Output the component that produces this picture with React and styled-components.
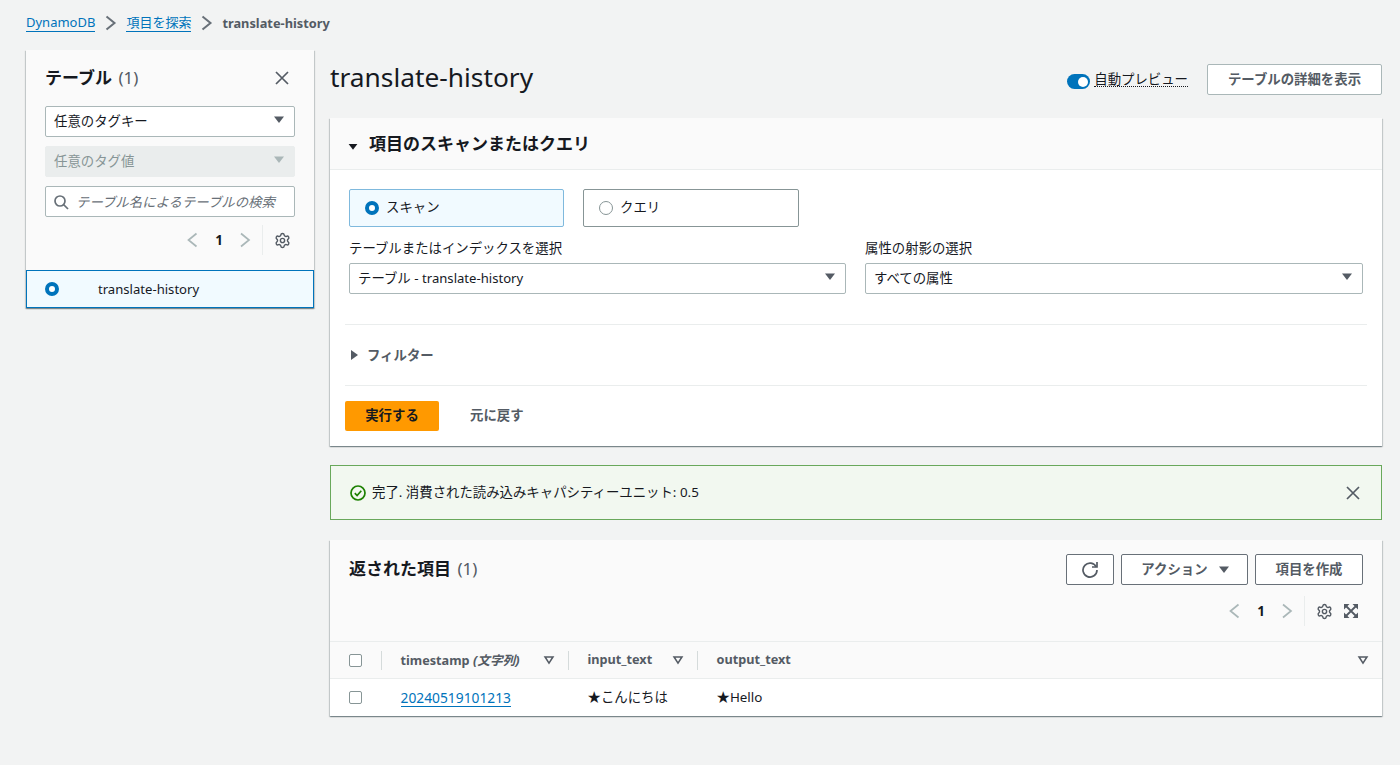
import React from 'react';
import styled, { createGlobalStyle } from 'styled-components';
import { Settings } from 'lucide-react';

const GlobalStyle = createGlobalStyle`
  html, body {
    margin: 0;
    padding: 0;
    background: #f2f3f3;
  }
  body {
    font-family: "Noto Sans", "Noto Sans CJK JP", sans-serif;
    font-size: 13.4px;
    color: #16191f;
  }
  * {
    box-sizing: border-box;
  }
`;

const Icon = ({ size = 16, color = '#545b64', width = 2, children }) => (
  <svg
    width={size}
    height={size}
    viewBox="0 0 16 16"
    fill="none"
    stroke={color}
    strokeWidth={width}
    style={{ flexShrink: 0, display: 'block' }}
  >
    {children}
  </svg>
);

const CaretDown = ({ color = '#545b64', size = 16 }) => (
  <svg width={size} height={size} viewBox="0 0 16 16" fill={color} style={{ flexShrink: 0, display: 'block' }}>
    <path d="M3 4.500h10L8 11z" />
  </svg>
);

const CaretRight = () => (
  <svg width="9" height="12" viewBox="0 0 9 12" fill="#545b64" style={{ display: 'block' }}>
    <path d="M1 1l7 5-7 5z" />
  </svg>
);

const SortIcon = () => (
  <Icon size={14} width={1.8}>
    <path d="M3.500 4.500h9L8 11.500z" />
  </Icon>
);

const Close = ({ size = 16 }) => (
  <Icon size={size} width={1.7}>
    <path d="M2 2l12 12M14 2L2 14" />
  </Icon>
);

const Separator = () => (
  <Icon color="#687078">
    <path d="M3.500 1.500l8 6.500-8 6.500" />
  </Icon>
);

const Expand = () => (
  <svg width="16" height="16" viewBox="0 0 16 16" fill="#545b64" style={{ display: 'block' }}>
    <path d="M1 1h5.500L1 6.500zM15 1v5.500L9.500 1zM1 15V9.500L6.500 15zM15 15H9.500L15 9.500z" />
    <path d="M3 3l10 10M13 3L3 13" stroke="#545b64" strokeWidth="1.8" />
  </svg>
);

const Pagination = () => (
  <>
    <Icon color="#aab7b8" width={1.7}>
      <path d="M11.500 1.500L3.500 8l8 6.500" />
    </Icon>
    <PageNumber>1</PageNumber>
    <Icon color="#aab7b8" width={1.7}>
      <path d="M4 1.500L12 8l-8 6.500" />
    </Icon>
    <PagerDivider />
    <Settings size={17} color="#545b64" strokeWidth={2} />
  </>
);

const App = () => (
  <Page>
    <GlobalStyle />
    <Breadcrumbs>
      <Crumb href="#">DynamoDB</Crumb>
      <Separator />
      <Crumb href="#">項目を探索</Crumb>
      <Separator />
      <CurrentCrumb>translate-history</CurrentCrumb>
    </Breadcrumbs>

    <Columns>
      <Sidebar>
        <SidebarBody>
          <SidebarTitleRow>
            <SidebarTitle>
              テーブル <Count>(1)</Count>
            </SidebarTitle>
            <Close />
          </SidebarTitleRow>
          <SidebarFields>
            <Select>
              任意のタグキー
              <CaretDown />
            </Select>
            <Select $disabled>
              任意のタグ値
              <CaretDown color="#aab7b8" />
            </Select>
            <SearchBox>
              <Icon width={1.7} color="#687078">
                <circle cx="7" cy="7" r="5" />
                <path d="M10.500 10.500L15 15" />
              </Icon>
              <Placeholder>テーブル名によるテーブルの検索</Placeholder>
            </SearchBox>
          </SidebarFields>
          <SidebarPager>
            <Pagination />
          </SidebarPager>
        </SidebarBody>
        <TableRowItem>
          <RadioDot $checked />
          <Latin>translate-history</Latin>
        </TableRowItem>
      </Sidebar>

      <Main>
        <PageHeader>
          <PageTitle>translate-history</PageTitle>
          <PageActions>
            <ToggleWrap>
              <Toggle />
              <ToggleLabel>自動プレビュー</ToggleLabel>
            </ToggleWrap>
            <Button $soft $width={175}>
              テーブルの詳細を表示
            </Button>
          </PageActions>
        </PageHeader>

        <Panel>
          <ScanHeader>
            <CaretDown color="#16191f" size={14} />
            <ScanTitle>項目のスキャンまたはクエリ</ScanTitle>
          </ScanHeader>
          <ScanBody>
            <FormArea>
              <TileRow>
                <Tile $active $width={215}>
                  <RadioDot $checked />
                  <TileLabel>スキャン</TileLabel>
                </Tile>
                <Tile $width={216}>
                  <RadioDot />
                  <TileLabel>クエリ</TileLabel>
                </Tile>
              </TileRow>
              <FieldGrid>
                <Field>
                  <FieldLabel>テーブルまたはインデックスを選択</FieldLabel>
                  <Select>
                    <span>
                      テーブル - <Latin>translate-history</Latin>
                    </span>
                    <CaretDown />
                  </Select>
                </Field>
                <Field>
                  <FieldLabel>属性の射影の選択</FieldLabel>
                  <Select>
                    すべての属性
                    <CaretDown />
                  </Select>
                </Field>
              </FieldGrid>
            </FormArea>
            <FilterRow>
              <CaretRight />
              <FilterLabel>フィルター</FilterLabel>
            </FilterRow>
            <ActionRow>
              <PrimaryButton>実行する</PrimaryButton>
              <LinkButton>元に戻す</LinkButton>
            </ActionRow>
          </ScanBody>
        </Panel>

        <Alert>
          <Icon color="#1d8102" width={1.7}>
            <circle cx="8" cy="8" r="7" />
            <path d="M4.800 8.200l2.300 2.300 4.200-4.800" />
          </Icon>
          <AlertText>完了. 消費された読み込みキャパシティーユニット: 0.5</AlertText>
          <Close />
        </Alert>

        <ResultsPanel>
          <ResultsHeader>
            <ResultsTop>
              <ResultsTitle>
                返された項目 <Count>(1)</Count>
              </ResultsTitle>
              <ButtonGroup>
                <Button $width={48}>
                  <Icon width={1.7}>
                    <path d="M10 5h5V0" />
                    <path d="M15 8a7 7 0 1 1-.7-3" />
                  </Icon>
                </Button>
                <ActionButton $width={127}>
                  アクション
                  <CaretDown />
                </ActionButton>
                <Button $width={108}>項目を作成</Button>
              </ButtonGroup>
            </ResultsTop>
            <ResultsPager>
              <Pagination />
              <ExpandSlot>
                <Expand />
              </ExpandSlot>
            </ResultsPager>
          </ResultsHeader>
          <HeadRow>
            <HeadCell>
              <Checkbox />
            </HeadCell>
            <HeadCell $sep>
              <span>
                timestamp <em>(文字列)</em>
              </span>
              <SortIcon />
            </HeadCell>
            <HeadCell $sep>
              <span>input_text</span>
              <SortIcon />
            </HeadCell>
            <HeadCell $sep>
              <span>output_text</span>
              <SortIcon />
            </HeadCell>
          </HeadRow>
          <BodyRow>
            <BodyCell>
              <Checkbox />
            </BodyCell>
            <BodyCell>
              <TableLink href="#">20240519101213</TableLink>
            </BodyCell>
            <TextCell>★こんにちは</TextCell>
            <TextCell>★Hello</TextCell>
          </BodyRow>
        </ResultsPanel>
      </Main>
    </Columns>
  </Page>
);

const Page = styled.div`
  width: 1400px;
  height: 765px;
  overflow: hidden;
  padding: 14px 18px 0 26px;
`;

const Breadcrumbs = styled.nav`
  display: flex;
  align-items: center;
  gap: 7.500px;
  height: 18px;
  margin-bottom: 18px;
`;

const Crumb = styled.a`
  color: #0073bb;
  font-size: 13px;
  text-decoration: none;
  border-bottom: 1px solid #0073bb;
  line-height: 17px;
`;

const TableLink = styled(Crumb)`
  font-size: 13.8px;
`;

const CurrentCrumb = styled.span`
  color: #545b64;
  font-size: 12.8px;
  font-weight: 700;
`;

const Latin = styled.span`
  font-size: 13.1px;
`;

const Columns = styled.div`
  display: flex;
  align-items: flex-start;
  gap: 16px;
`;

const Sidebar = styled.aside`
  width: 288px;
  flex-shrink: 0;
  background: #fafafa;
  box-shadow: 0 1px 1px 0 rgba(0, 28, 36, 0.3), 1px 1px 1px 0 rgba(0, 28, 36, 0.15),
    -1px 1px 1px 0 rgba(0, 28, 36, 0.15);
`;

const SidebarBody = styled.div`
  padding: 16px 19px 15px;
`;

const SidebarTitleRow = styled.div`
  display: flex;
  align-items: center;
  justify-content: space-between;
  height: 24px;
  margin-bottom: 16px;
  padding-right: 5px;
`;

const SidebarTitle = styled.h2`
  margin: 0;
  font-size: 17px;
  font-weight: 700;
  line-height: 24px;
`;

const Count = styled.span`
  margin-left: 2px;
  font-weight: 400;
  color: #545b64;
`;

const SidebarFields = styled.div`
  display: flex;
  flex-direction: column;
  gap: 9px;
`;

const Select = styled.div`
  display: flex;
  align-items: center;
  justify-content: space-between;
  height: 31px;
  padding: 0 7px 4px 8px;
  background: ${(p) => (p.$disabled ? '#eaeded' : '#fff')};
  color: ${(p) => (p.$disabled ? '#879596' : '#16191f')};
  border: 1px solid ${(p) => (p.$disabled ? '#eaeded' : '#aab7b8')};
  border-radius: 2px;
`;

const SearchBox = styled.div`
  display: flex;
  align-items: center;
  gap: 7px;
  height: 31px;
  padding: 0 7px;
  background: #fff;
  border: 1px solid #aab7b8;
  border-radius: 2px;
`;

const Placeholder = styled.span`
  margin-bottom: 2px;
  color: #687078;
  font-style: italic;
  white-space: nowrap;
`;

const SidebarPager = styled.div`
  display: flex;
  align-items: center;
  justify-content: flex-end;
  height: 30px;
  margin-top: 8px;
  padding-right: 4px;
`;

const PageNumber = styled.span`
  width: 36px;
  text-align: center;
  font-weight: 700;
`;

const PagerDivider = styled.span`
  width: 1px;
  height: 30px;
  background: #eaeded;
  margin: 0 11px 0 9px;
`;

const TableRowItem = styled.div`
  display: flex;
  align-items: center;
  gap: 39px;
  height: 38px;
  padding-left: 18px;
  background: #f1faff;
  border: 1px solid #0073bb;
`;

const RadioDot = styled.span`
  display: block;
  flex-shrink: 0;
  width: 14px;
  height: 14px;
  border-radius: 50%;
  background: #fff;
  border: ${(p) => (p.$checked ? '4px solid #0073bb' : '1.3px solid #879596')};
`;

const Main = styled.main`
  flex: 1;
  min-width: 0;
`;

const PageHeader = styled.header`
  display: flex;
  align-items: center;
  justify-content: space-between;
  height: 68px;
  padding-bottom: 10px;
`;

const PageTitle = styled.h1`
  margin: 0 0 4px;
  font-size: 26.3px;
  font-weight: 400;
  line-height: 36px;
`;

const PageActions = styled.div`
  display: flex;
  align-items: center;
  gap: 19px;
`;

const ToggleWrap = styled.div`
  display: flex;
  align-items: center;
  gap: 4px;
`;

const Toggle = styled.span`
  position: relative;
  display: block;
  width: 23px;
  height: 15px;
  margin-top: 5px;
  border-radius: 8px;
  background: #0073bb;
  &::after {
    content: '';
    position: absolute;
    top: 2.500px;
    right: 2px;
    width: 10px;
    height: 10px;
    border-radius: 50%;
    background: #fff;
  }
`;

const ToggleLabel = styled.span`
  margin-bottom: 2px;
  padding-top: 3px;
  color: #16191f;
  line-height: 14px;
  border-bottom: 1px dotted #16191f;
`;

const Button = styled.button`
  display: flex;
  align-items: center;
  justify-content: center;
  gap: 8px;
  width: ${(p) => p.$width}px;
  height: 31px;
  padding: 0 0 3px;
  background: #fff;
  color: #545b64;
  font: inherit;
  font-weight: 700;
  border: 1px solid ${(p) => (p.$soft ? '#aab7b8' : '#687078')};
  border-radius: 2px;
  svg {
    margin-top: 3px;
  }
`;

const ActionButton = styled(Button)`
  padding-left: 4px;
`;

const Panel = styled.section`
  background: #fff;
  box-shadow: 0 1px 1px 0 rgba(0, 28, 36, 0.3), 1px 1px 1px 0 rgba(0, 28, 36, 0.15),
    -1px 1px 1px 0 rgba(0, 28, 36, 0.15);
`;

const ScanHeader = styled.div`
  display: flex;
  align-items: center;
  gap: 9px;
  height: 52px;
  padding: 0 19px 0 16px;
  background: #fafafa;
  border-bottom: 1px solid #eaeded;
  svg {
    margin-top: 6px;
  }
`;

const ScanTitle = styled.h2`
  margin: 0 0 3px;
  font-size: 17px;
  font-weight: 700;
`;

const ScanBody = styled.div`
  padding: 19px 15px 15px;
`;

const FormArea = styled.div`
  padding: 0 4px 30px;
  border-bottom: 1px solid #eaeded;
`;

const TileRow = styled.div`
  display: flex;
  gap: 19px;
  margin-bottom: 12px;
`;

const Tile = styled.div`
  display: flex;
  align-items: center;
  gap: 7px;
  width: ${(p) => p.$width}px;
  height: 38px;
  padding-left: 15px;
  background: ${(p) => (p.$active ? '#f1faff' : '#fff')};
  border: 1px solid ${(p) => (p.$active ? '#7fb9dd' : '#879596')};
  border-radius: 2px;
`;

const TileLabel = styled.span`
  margin-bottom: 4px;
`;

const FieldGrid = styled.div`
  display: grid;
  grid-template-columns: 497px 498px;
  gap: 19px;
`;

const Field = styled.div`
  display: flex;
  flex-direction: column;
  gap: 5px;
`;

const FieldLabel = styled.label`
  color: #16191f;
  line-height: 19px;
`;

const FilterRow = styled.div`
  display: flex;
  align-items: center;
  gap: 8px;
  height: 61px;
  padding-left: 5px;
  border-bottom: 1px solid #eaeded;
`;

const FilterLabel = styled.span`
  margin-bottom: 2px;
  color: #545b64;
  font-weight: 700;
`;

const ActionRow = styled.div`
  display: flex;
  align-items: center;
  gap: 31px;
  padding-top: 15px;
`;

const PrimaryButton = styled.button`
  width: 94px;
  height: 30px;
  padding: 0 0 5px;
  background: #ff9900;
  color: #16191f;
  font: inherit;
  font-weight: 700;
  border: none;
  border-radius: 2px;
`;

const LinkButton = styled.button`
  height: 30px;
  padding: 0 0 5px;
  background: none;
  color: #545b64;
  font: inherit;
  font-weight: 700;
  border: none;
`;

const Alert = styled.div`
  display: flex;
  align-items: center;
  gap: 6px;
  height: 55px;
  margin: 19px 0 20px;
  padding: 0 20px 0 19px;
  background: #f2f8f0;
  border: 1px solid #69a85b;
`;

const AlertText = styled.span`
  flex: 1;
  margin-bottom: 4px;
`;

const ResultsPanel = styled(Panel)`
  background: #fff;
`;

const ResultsHeader = styled.div`
  height: 101px;
  padding: 14px 19px 0;
  background: #fafafa;
`;

const ResultsTop = styled.div`
  display: flex;
  justify-content: space-between;
  align-items: flex-start;
`;

const ResultsTitle = styled.h2`
  margin: 0;
  font-size: 17px;
  font-weight: 700;
  line-height: 30px;
`;

const ButtonGroup = styled.div`
  display: flex;
  gap: 7px;
`;

const ResultsPager = styled.div`
  display: flex;
  align-items: center;
  justify-content: flex-end;
  height: 30px;
  margin-top: 11px;
  padding-right: 4px;
`;

const ExpandSlot = styled.span`
  margin-left: 10px;
`;

const HeadRow = styled.div`
  display: grid;
  grid-template-columns: 51px 187px 129px 1fr;
  height: 38px;
  background: #fafafa;
  border-top: 1px solid #eaeded;
  border-bottom: 1px solid #eaeded;
`;

const HeadCell = styled.div`
  position: relative;
  display: flex;
  align-items: center;
  justify-content: ${(p) => (p.$sep ? 'space-between' : 'flex-start')};
  padding: 0 ${(p) => (p.$sep ? '12px' : '0')} 0 19.500px;
  color: #545b64;
  font-size: 12.7px;
  font-weight: 700;
  span {
    margin-bottom: 2px;
  }
  em {
    font-style: italic;
  }
  &::before {
    content: '';
    display: ${(p) => (p.$sep ? 'block' : 'none')};
    position: absolute;
    left: 0;
    top: 9px;
    width: 1px;
    height: 19px;
    background: #d5dbdb;
  }
`;

const BodyRow = styled.div`
  display: grid;
  grid-template-columns: 51px 187px 129px 1fr;
  align-items: center;
  height: 37px;
`;

const BodyCell = styled.div`
  display: flex;
  padding-left: 19.500px;
`;

const TextCell = styled(BodyCell)`
  padding-bottom: 4px;
`;

const Checkbox = styled.div`
  width: 13px;
  height: 13px;
  margin-left: -1px;
  background: #fff;
  border: 1px solid #879596;
  border-radius: 2px;
`;

export default App;
